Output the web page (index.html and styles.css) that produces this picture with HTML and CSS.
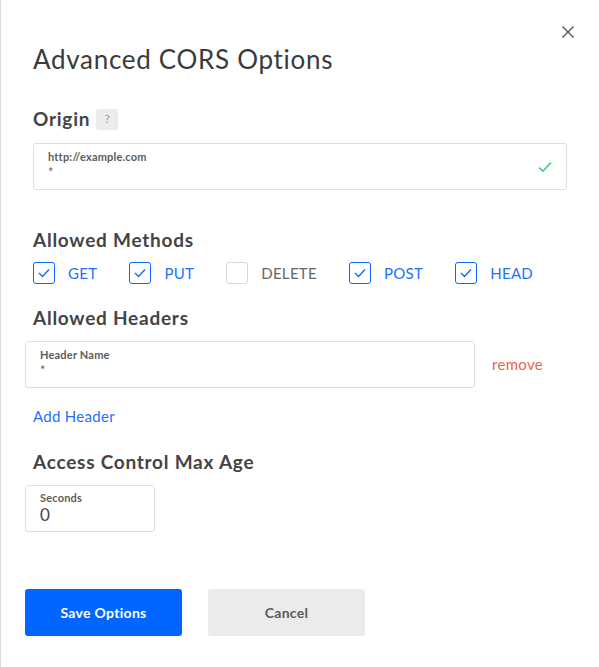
FILE: index.html
```html
<!DOCTYPE html>
<html>
<head>
<meta charset="utf-8">
<link rel="stylesheet" href="styles.css">
</head>
<body>
<div class="panel">
  <button class="close" aria-label="Close">
    <svg width="14" height="14" viewBox="0 0 14 14"><path d="M1.5 1.5L12.5 12.5M12.5 1.5L1.5 12.5" stroke="#555" stroke-width="1.4" fill="none"/></svg>
  </button>
  <h1 class="title">Advanced CORS Options</h1>

  <h2 class="heading heading-origin">Origin <span class="help">?</span></h2>
  <div class="field field-origin">
    <div class="field-text">
      <div class="field-label">http://example.com</div>
      <div class="field-value">*</div>
    </div>
    <svg class="valid" width="14" height="12" viewBox="0 0 14 12"><path d="M1 6.5L5 10.2L13 1.5" stroke="#2fd27a" stroke-width="1.6" fill="none"/></svg>
  </div>

  <h2 class="heading heading-methods">Allowed Methods</h2>
  <div class="methods">
    <label class="method on"><span class="box"><svg width="12" height="10" viewBox="0 0 12 10"><path d="M1 5L4.5 8.5L11 1.5" stroke="#0a66ff" stroke-width="1.3" fill="none"/></svg></span>GET</label>
    <label class="method on"><span class="box"><svg width="12" height="10" viewBox="0 0 12 10"><path d="M1 5L4.5 8.5L11 1.5" stroke="#0a66ff" stroke-width="1.3" fill="none"/></svg></span>PUT</label>
    <label class="method off"><span class="box"></span>DELETE</label>
    <label class="method on"><span class="box"><svg width="12" height="10" viewBox="0 0 12 10"><path d="M1 5L4.5 8.5L11 1.5" stroke="#0a66ff" stroke-width="1.3" fill="none"/></svg></span>POST</label>
    <label class="method on"><span class="box"><svg width="12" height="10" viewBox="0 0 12 10"><path d="M1 5L4.5 8.5L11 1.5" stroke="#0a66ff" stroke-width="1.3" fill="none"/></svg></span>HEAD</label>
  </div>

  <h2 class="heading heading-headers">Allowed Headers</h2>
  <div class="header-row">
    <div class="field field-header">
      <div class="field-text">
        <div class="field-label">Header Name</div>
        <div class="field-value">*</div>
      </div>
    </div>
    <a class="remove">remove</a>
  </div>
  <a class="add">Add Header</a>

  <h2 class="heading heading-age">Access Control Max Age</h2>
  <div class="field field-seconds">
    <div class="field-text">
      <div class="field-label">Seconds</div>
      <div class="field-value big">0</div>
    </div>
  </div>

  <div class="actions">
    <button class="btn btn-primary">Save Options</button>
    <button class="btn btn-secondary">Cancel</button>
  </div>
</div>
</body>
</html>
```
FILE: styles.css
```css
* { box-sizing: border-box; }
html, body { margin: 0; padding: 0; background: #fff; }
body {
  font-family: "Lato", "Open Sans", sans-serif;
  color: #333;
}
.panel {
  position: relative;
  min-height: 667px;
  border-left: 1px solid #dcdcdc;
  padding: 44px 0 0 24px;
}
.close {
  position: absolute;
  top: 25px;
  left: 560px;
  width: 14px;
  height: 14px;
  padding: 0;
  border: 0;
  background: none;
  display: flex;
}
.title {
  margin: 0 0 0 8px;
  font-size: 26px;
  line-height: 30px;
  font-weight: 400;
  letter-spacing: 0.7px;
  color: #3b3b3b;
}
.heading {
  margin: 0 0 0 8px;
  font-size: 19px;
  line-height: 24px;
  font-weight: 700;
  letter-spacing: 0.75px;
  color: #444;
  display: flex;
  align-items: center;
}
.heading-origin { margin-top: 33px; }
.heading-methods { margin-top: 38px; }
.heading-headers { margin-top: 22px; }
.heading-age { margin-top: 24px; }
.help {
  margin-left: 6px;
  width: 22px;
  height: 21px;
  border-radius: 3px;
  background: #ececec;
  color: #9a9a9a;
  font-size: 12px;
  font-weight: 400;
  letter-spacing: 0;
  display: flex;
  align-items: center;
  justify-content: center;
}
.field {
  border: 1px solid #dedede;
  border-radius: 3px;
  height: 47px;
  display: flex;
  align-items: center;
  padding: 0 14px;
}
.field-text { flex: 1; display: flex; flex-direction: column; }
.field-label {
  font-size: 11px;
  line-height: 13px;
  font-weight: 700;
  letter-spacing: 0.2px;
  color: #5c5c5c;
  margin-top: -3px;
}
.field-value {
  font-size: 13px;
  line-height: 15px;
  color: #666;
  margin-top: 2px;
}
.field-value.big { font-size: 17px; line-height: 18px; color: #444; margin-top: 2px; }
.field-origin { margin: 12px 0 0 8px; width: 534px; }
.methods {
  margin: 10px 0 0 8px;
  display: flex;
  gap: 32px;
}
.method {
  display: flex;
  align-items: center;
  gap: 13px;
  font-size: 15px;
  line-height: 22px;
  letter-spacing: 0.3px;
  color: #1f6fff;
}
.method.off { color: #666; }
.box {
  width: 22px;
  height: 22px;
  border: 1px solid #0a66ff;
  border-radius: 3px;
  display: flex;
  align-items: center;
  justify-content: center;
}
.method.off .box { border-color: #d8d8d8; }
.header-row {
  margin-top: 11px;
  display: flex;
  align-items: center;
  gap: 17px;
}
.field-header { width: 450px; }
.remove {
  font-size: 15px;
  letter-spacing: 0.3px;
  color: #ef5f4c;
  margin-top: -1px;
}
.add {
  display: block;
  margin: 18px 0 0 8px;
  font-size: 15px;
  line-height: 20px;
  letter-spacing: 0.3px;
  color: #1f6fff;
}
.field-seconds { margin-top: 11px; width: 130px; }
.actions {
  margin-top: 57px;
  display: flex;
  gap: 26px;
}
.btn {
  width: 157px;
  height: 47px;
  border: 0;
  border-radius: 3px;
  font-family: "Lato", "Open Sans", sans-serif;
  font-size: 14px;
  font-weight: 700;
  letter-spacing: 0.3px;
}
.btn-primary { background: #0066ff; color: #fff; }
.btn-secondary { background: #ebebeb; color: #5a5a5a; }
```
